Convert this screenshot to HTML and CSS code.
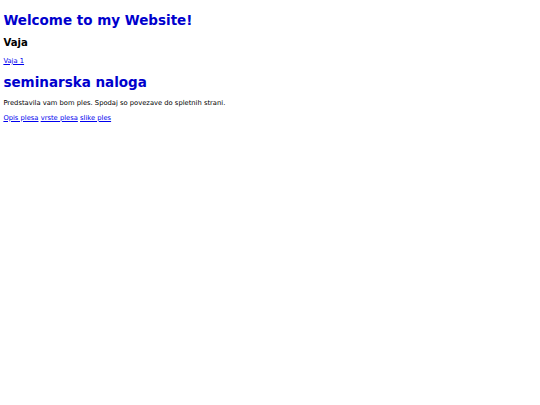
FILE: index.html
```html
<!DOCTYPE html>
<html>
<head>
<meta charset="utf-8">
<title>Welcome</title>
<link rel="stylesheet" href="styles.css">
</head>
<body class="page">
<h1 class="title">Welcome to my Website!</h1>
<h2 class="subtitle">Vaja</h2>
<p class="text"><a class="link" href="#">Vaja 1</a></p>
<h1 class="title">seminarska naloga</h1>
<p class="text">Predstavila vam bom ples. Spodaj so povezave do spletnih strani.</p>
<p class="text"><a class="link" href="#">Opis plesa</a> <a class="link" href="#">vrste plesa</a> <a class="link" href="#">slike ples</a></p>
</body>
</html>
```

FILE: styles.css
```css
html, body {
  background: #ffffff;
}
.page {
  margin: 3.4px;
  font-family: "DejaVu Sans", sans-serif;
  font-size: 6.75px;
  color: #000000;
}
.title {
  font-size: 2em;
  margin: 0.67em 0;
  color: #0000cd;
  font-weight: bold;
}
.subtitle {
  font-size: 1.5em;
  margin: 0.83em 0;
  font-weight: bold;
}
.text {
  margin: 1em 0;
}
.link {
  color: #0000ee;
}
```
